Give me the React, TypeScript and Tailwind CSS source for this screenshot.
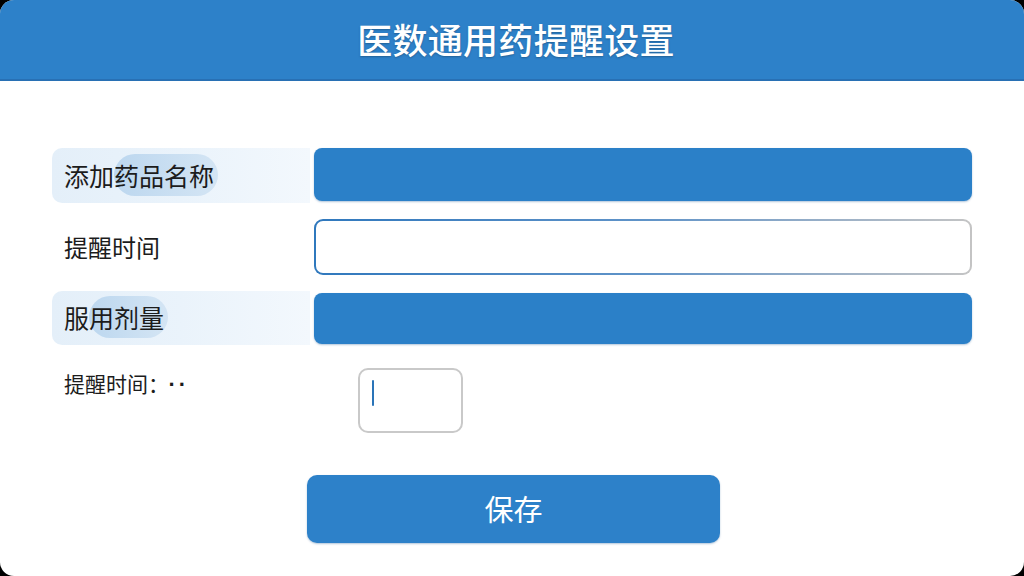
import * as React from "react";

const cjk = { fontFamily: '"Noto Sans CJK SC", "Noto Sans", sans-serif' };

interface RowProps {
  plain: string;
  marked: string;
}

const HighlightLabel: React.FC<RowProps> = ({ plain, marked }) => (
  <div className="flex w-[258px] items-center self-stretch rounded-l-[10px] bg-gradient-to-r from-[#e4eff9] via-[#eaf3fb] to-[#f3f8fd] pl-3">
    <span className="text-[25px] text-[#1c1c1c]">
      {plain}
      <span className="rounded-full bg-gradient-to-r from-[#bcd7ef] to-[#d4e5f4] py-[3px] pr-1">
        {marked}
      </span>
    </span>
  </div>
);

const App: React.FC = () => {
  return (
    <div className="h-[576px] w-[1024px] bg-black" style={cjk}>
      <div className="flex h-full flex-col overflow-hidden rounded-[14px] bg-white">
        {/* header */}
        <header className="flex h-[81px] shrink-0 items-center justify-center border-b-2 border-[#2870b4] bg-[#2d81c9] pl-2">
          <h1 className="text-[35px] font-medium tracking-[0.3px] text-white [text-shadow:0_1px_2px_rgba(0,0,0,0.25)]">
            医数通用药提醒设置
          </h1>
        </header>

        <main className="flex flex-col px-[52px] pt-[67px]">
          {/* row 1 */}
          <div className="flex h-[55px] items-center gap-1">
            <HighlightLabel plain="添加" marked="药品名称" />
            <div className="h-[53px] flex-1 self-start rounded-[8px] bg-[#2b80c8] shadow-[0_1px_2px_rgba(30,90,150,0.35)]" />
          </div>

          {/* row 2 */}
          <div className="mt-4 flex h-[56px] items-center gap-1">
            <div className="flex w-[258px] items-center pl-3">
              <span className="text-[24px] text-[#1c1c1c]">提醒时间</span>
            </div>
            <div className="h-[56px] flex-1 rounded-[9px] bg-gradient-to-r from-[#2f78bd] via-[#5f93c8] to-[#c4c4c4] p-[2px]">
              <div className="h-full w-full rounded-[7px] bg-white" />
            </div>
          </div>

          {/* row 3 */}
          <div className="mt-4 flex h-[54px] items-center gap-1">
            <HighlightLabel plain="服" marked="用剂量" />
            <div className="h-[51px] flex-1 rounded-[8px] bg-[#2b80c8] shadow-[0_1px_2px_rgba(30,90,150,0.35)]" />
          </div>

          {/* row 4 */}
          <div className="mt-[23px] flex items-start">
            <div className="w-[306px] pl-3">
              <span className="text-[21px] text-[#1c1c1c]">
                提醒时间：
                <span className="ml-[10px] font-['Liberation_Sans',sans-serif] text-[22px] font-bold tracking-[3px]">··</span>
              </span>
            </div>
            <div className="flex h-[65px] w-[105px] items-start rounded-[10px] border-2 border-[#c9c9c9] bg-white pl-[12px] pt-[10px]">
              <div className="h-[26px] w-[2px] rounded-full bg-[#2a74b8]" />
            </div>
          </div>

          {/* save */}
          <div className="mt-[42px] flex">
            <button className="ml-[255px] flex h-[68px] w-[413px] items-center justify-center rounded-[10px] bg-[#2d81c9] text-[29px] text-white shadow-[0_1px_2px_rgba(30,90,150,0.35)]">
              保存
            </button>
          </div>
        </main>
      </div>
    </div>
  );
};

export default App;
